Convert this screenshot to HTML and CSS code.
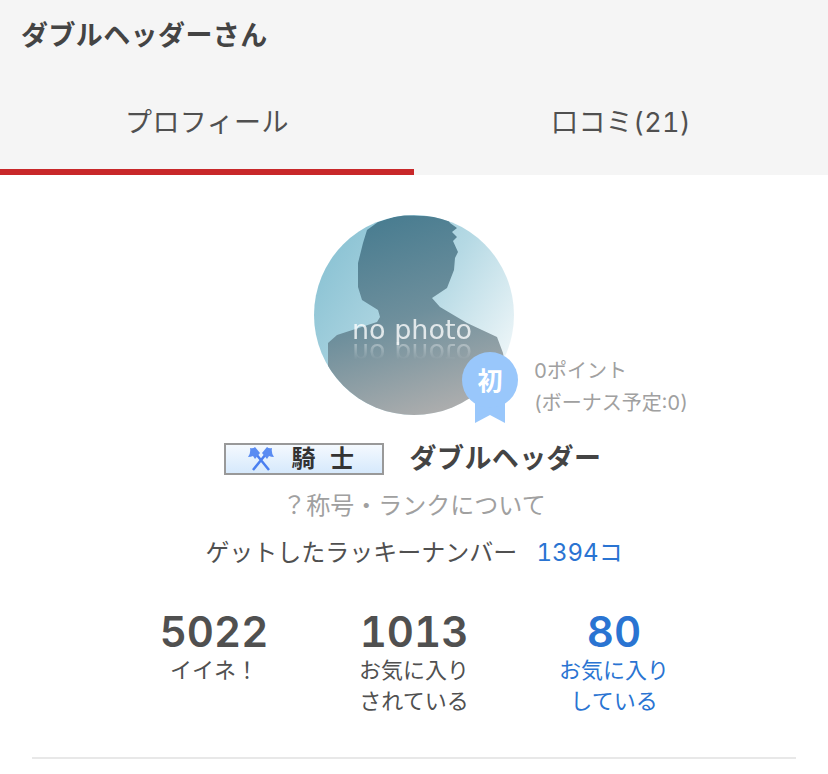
FILE: index.html
```html
<!DOCTYPE html>
<html lang="ja">
<head>
    <meta charset="UTF-8">
    <meta name="viewport" content="width=device-width, initial-scale=1.0">
    <title>ダブルヘッダーさん</title>
    <link rel="stylesheet" href="styles.css">
</head>
<body>
    <header>
        <h1>ダブルヘッダーさん</h1>
        <nav class="tabs">
            <a class="tab active">プロフィール</a>
            <a class="tab">口コミ(21)</a>
        </nav>
    </header>

    <main class="profile">
        <div class="avatar-row">
            <div class="avatar">
                <svg class="avatar-img" viewBox="0 0 200 200" width="200" height="200">
                    <defs>
                        <linearGradient id="bg" x1="0" y1="0.1" x2="1" y2="0.75">
                            <stop offset="0" stop-color="#84bfd1"/>
                            <stop offset="0.55" stop-color="#b5d9e4"/>
                            <stop offset="1" stop-color="#f2f8fa"/>
                        </linearGradient>
                        <linearGradient id="person" x1="0.3" y1="0" x2="0.6" y2="1">
                            <stop offset="0" stop-color="#487c90"/>
                            <stop offset="0.5" stop-color="#6e8f9c"/>
                            <stop offset="1" stop-color="#aeaeae"/>
                        </linearGradient>
                        <clipPath id="round"><circle cx="100" cy="100" r="100"/></clipPath>
                    </defs>
                    <g clip-path="url(#round)">
                        <rect width="200" height="200" fill="url(#bg)"/>
                        <path fill="url(#person)" d="M64 7 L86 0 L133 2 L136 8 L143 13 L138 17 L143 22 L139 26 L144 37 L141 43 L140 55 L133 73 L118 83 L126 92 L153 108 L183 122 L189 138 L200 200 L30 200 L29 175 L14 152 L14 128 L23 120 L63 107 L66 102 L64 95 L48 85 L44 72 L44 48 L49 28 L53 15 Z"/>
                    </g>
                </svg>
                <span class="nophoto">no photo</span>
                <div class="ribbon">
                    <svg class="ribbon-tail" viewBox="0 0 30 34" width="30" height="34"><path d="M0 0 H30 V34 L15 26 L0 34 Z"/></svg>
                    <span class="ribbon-mark">初</span>
                </div>
            </div>
            <div class="points">
                <div>0ポイント</div>
                <div>(ボーナス予定:0)</div>
            </div>
        </div>

        <div class="title-row">
            <div class="rank">
                <svg class="rank-icon" viewBox="0 0 26 24" width="26" height="24">
                    <path class="axe-shaft" d="M8 7 L21 23 M18 7 L5 23"/>
                    <path class="axe-head" d="M7 0 L12 6 L7 12 L5 9 Q3 10 0 10 Q3 6 2 1 Q5 2 7 0 Z M19 0 L14 6 L19 12 L21 9 Q23 10 26 10 Q23 6 24 1 Q21 2 19 0 Z"/>
                </svg>
                <span class="rank-name">騎 士</span>
            </div>
            <div class="name">ダブルヘッダー</div>
        </div>

        <a class="rank-help">？称号・ランクについて</a>

        <div class="lucky">
            <span>ゲットしたラッキーナンバー</span>
            <a class="link">1394コ</a>
        </div>

        <div class="stats">
            <div class="stat">
                <div class="stat-num">5022</div>
                <div class="stat-label">イイネ！</div>
            </div>
            <div class="stat">
                <div class="stat-num">1013</div>
                <div class="stat-label">お気に入り<br>されている</div>
            </div>
            <a class="stat link">
                <div class="stat-num">80</div>
                <div class="stat-label">お気に入り<br>している</div>
            </a>
        </div>

        <hr class="divider">
    </main>
</body>
</html>
```

FILE: styles.css
```css
* {
    margin: 0;
    padding: 0;
    box-sizing: border-box;
}

body {
    font-family: Inter, "Noto Sans CJK JP", sans-serif;
    font-variant-numeric: tabular-nums;
    color: #505050;
    background-color: white;
    overflow: hidden;
}

header {
    background-color: #f5f5f5;
}

h1 {
    font-size: 27px;
    line-height: 40px;
    letter-spacing: 0.4px;
    padding: 16px 21px 0;
    color: #444;
}

.tabs {
    display: flex;
    margin-top: 13px;
}

.tab {
    flex: 1;
    height: 106px;
    padding-top: 34px;
    font-size: 27px;
    line-height: 40px;
    letter-spacing: 0.4px;
    text-align: center;
}

.tab.active {
    border-bottom: 6px solid #c8282a;
}

.avatar-row {
    display: grid;
    grid-template-columns: 1fr 200px 1fr;
    margin-top: 40px;
}

.avatar {
    grid-column: 2;
    position: relative;
    width: 200px;
    height: 200px;
}

.avatar-img {
    display: block;
}

.nophoto {
    position: absolute;
    left: 38px;
    top: 104px;
    font-family: "DejaVu Sans", sans-serif;
    font-size: 27px;
    line-height: 22px;
    color: rgba(255, 255, 255, 0.78);
    -webkit-box-reflect: below 1px linear-gradient(transparent 20%, rgba(255, 255, 255, 0.5));
}

.ribbon {
    position: absolute;
    left: 148px;
    top: 137px;
    width: 56px;
    height: 71px;
}

.ribbon-tail {
    position: absolute;
    left: 13px;
    top: 37px;
    fill: #99c7fb;
}

.ribbon-mark {
    position: absolute;
    left: 0;
    top: 0;
    width: 56px;
    height: 56px;
    border-radius: 50%;
    background-color: #99c7fb;
    color: white;
    font-size: 25px;
    font-weight: bold;
    line-height: 58px;
    text-align: center;
}

.points {
    align-self: end;
    padding-left: 20px;
    margin-bottom: -4px;
    font-size: 20px;
    line-height: 32px;
    color: #a0a0a0;
}

.title-row {
    display: flex;
    justify-content: center;
    align-items: center;
    gap: 26px;
    margin-top: 24px;
    padding-right: 3px;
}

.rank {
    display: flex;
    align-items: center;
    gap: 18px;
    width: 160px;
    height: 32px;
    padding-left: 22px;
    border: 2px solid #999;
    background: linear-gradient(#f4f9fe, #d6e9fc);
}

.rank-icon {
    display: block;
}

.axe-shaft {
    fill: none;
    stroke: #4a7ff0;
    stroke-width: 2.5;
}

.axe-head {
    fill: #5a8cf2;
}

.rank-name {
    font-size: 24px;
    line-height: 28px;
    font-weight: bold;
    word-spacing: 8px;
    color: #333;
    white-space: pre;
}

.name {
    font-size: 27px;
    line-height: 40px;
    letter-spacing: 0.4px;
    font-weight: bold;
    color: #444;
}

.rank-help {
    display: block;
    margin-top: 9px;
    font-size: 24px;
    line-height: 36px;
    color: #a0a0a0;
    text-align: center;
}

.lucky {
    display: flex;
    justify-content: center;
    gap: 19px;
    margin-top: 11px;
    font-size: 24px;
    line-height: 36px;
}

.link {
    color: #2a74d2;
}

.stats {
    display: grid;
    grid-template-columns: repeat(3, 200px);
    justify-content: center;
    margin-top: 37px;
    text-align: center;
}

.stat-num {
    font-size: 42px;
    line-height: 47px;
    font-weight: 600;
}

.stat-label {
    font-size: 22px;
    line-height: 31px;
}

.divider {
    border: none;
    border-top: 2px solid #e8e8e8;
    margin: 40px 32px 0;
}
```
